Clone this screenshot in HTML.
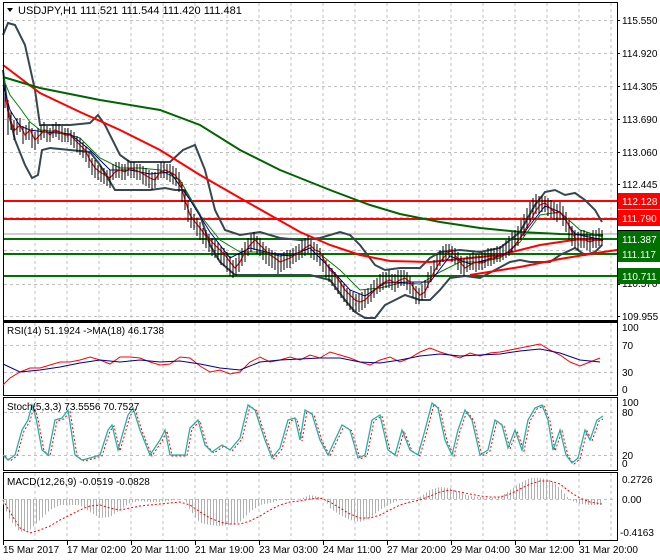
<!DOCTYPE html>
<html><head><meta charset="utf-8"><style>
html,body{margin:0;padding:0;background:#fff;width:660px;height:560px;overflow:hidden}
svg{display:block;font-family:"Liberation Sans",sans-serif;font-size:10px}
</style></head><body>
<svg width="660" height="560" viewBox="0 0 660 560" xmlns="http://www.w3.org/2000/svg">
<defs>
<pattern id="hp" width="3" height="600" patternUnits="userSpaceOnUse"><rect x="0" y="0" width="1" height="600" fill="#b0b0b0"/></pattern>
</defs>
<rect width="660" height="560" fill="#fff"/>
<g stroke="#c0c0c0" stroke-dasharray="3,3" stroke-width="1">
<path d="M35 3V320M67 3V320M99 3V320M131 3V320M163 3V320M195 3V320M227 3V320M259 3V320M291 3V320M323 3V320M355 3V320M387 3V320M419 3V320M451 3V320M483 3V320M515 3V320M547 3V320M579 3V320M611 3V320"/>
<path d="M35 323V395M67 323V395M99 323V395M131 323V395M163 323V395M195 323V395M227 323V395M259 323V395M291 323V395M323 323V395M355 323V395M387 323V395M419 323V395M451 323V395M483 323V395M515 323V395M547 323V395M579 323V395M611 323V395"/>
<path d="M35 398V470M67 398V470M99 398V470M131 398V470M163 398V470M195 398V470M227 398V470M259 398V470M291 398V470M323 398V470M355 398V470M387 398V470M419 398V470M451 398V470M483 398V470M515 398V470M547 398V470M579 398V470M611 398V470"/>
<path d="M35 473V540M67 473V540M99 473V540M131 473V540M163 473V540M195 473V540M227 473V540M259 473V540M291 473V540M323 473V540M355 473V540M387 473V540M419 473V540M451 473V540M483 473V540M515 473V540M547 473V540M579 473V540M611 473V540"/>
<path d="M4 20.5H616M4 53.5H616M4 86.5H616M4 119.5H616M4 152.5H616M4 184.5H616M4 217.5H616M4 250.5H616M4 284.5H616M4 316.5H616"/>
<path d="M4 345.5H616M4 372.5H616M4 412.5H616M4 455.5H616M4 499.5H616"/>
</g>
<g stroke-width="2">
<path d="M4 201H617" stroke="#ff0000"/>
<path d="M4 219H617" stroke="#ff0000"/>
<path d="M4 239H617" stroke="#007000"/>
<path d="M4 254H617" stroke="#007000"/>
<path d="M4 276H617" stroke="#007000"/>
</g>
<path d="M4 234H617" stroke="#a0a0a0" stroke-width="1"/>
<g fill="none" stroke="#37474f" stroke-width="2">
<polyline points="3,35 8,23 15,25 25,45 35,90 40,125 50,125 70,125 90,123 98,115 105,125 120,155 130,162 150,162 170,162 183,150 195,145 205,170 215,210 225,230 240,235 260,232 280,238 300,240 320,238 340,232 350,235 360,245 375,265 385,270 400,268 420,268 430,258 440,252 460,250 480,252 500,248 520,232 535,205 545,192 555,190 565,195 575,193 585,200 595,210 602,222"/>
<polyline points="3,70 8,110 15,140 25,165 32,178 38,175 42,150 50,148 70,150 90,152 100,165 115,190 125,190 150,190 165,188 175,190 185,190 200,215 210,245 220,262 235,275 250,275 270,275 290,275 310,275 330,280 345,300 355,312 365,318 375,318 385,305 395,300 405,295 420,300 430,300 440,290 450,278 465,276 480,278 495,270 510,262 520,260 530,262 540,262 550,262 560,255 575,248 585,255 595,252 602,245"/>
</g>
<polyline fill="none" stroke="#ff0000" stroke-width="2" points="3,65 40,93 80,112 120,130 160,150 200,175 240,198 270,215 300,232 330,245 360,255 390,261 430,262 470,258 500,255 540,245 580,239 603,240"/>
<polyline fill="none" stroke="#ff0000" stroke-width="2" points="470,275 520,267 560,259 590,254 617,250"/>
<polyline fill="none" stroke="#006400" stroke-width="2" points="3,77 40,88 100,100 160,110 200,125 240,150 280,170 330,190 370,205 400,214 440,222 480,228 520,232 560,234 603,235"/>
<polyline fill="none" stroke="#008000" stroke-width="1" points="3,78 10,95 20,108 30,122 40,130 60,132 80,138 100,158 120,168 140,168 160,170 180,180 200,215 220,240 240,252 260,252 280,256 300,253 320,254 340,270 360,290 380,288 400,283 420,284 440,272 460,262 480,262 500,258 520,242 540,215 560,212 580,230 603,237"/>
<polyline fill="none" stroke="#00008b" stroke-width="1" points="3,85 10,110 20,126 30,130 45,132 70,134 90,150 110,170 130,170 150,174 170,172 190,200 210,232 230,258 250,248 270,253 290,256 310,248 330,268 350,290 365,296 385,283 410,282 430,282 450,256 470,264 490,259 510,252 530,225 545,206 560,212 575,234 603,240"/>
<polyline fill="none" stroke="#ff0000" stroke-width="1.2" points="5,95 10,120 15,130 20,125 25,135 30,130 35,140 40,135 45,130 50,135 55,130 60,132 65,135 70,135 75,140 80,145 85,150 90,160 95,168 100,172 105,175 110,178 115,172 120,170 125,172 130,168 135,170 140,172 145,175 150,178 155,180 160,172 165,170 170,172 175,175 180,182 185,200 190,215 195,222 200,228 205,235 210,240 215,245 220,250 225,255 230,262 235,268 240,262 245,252 250,245 255,240 260,245 265,250 270,255 275,258 280,262 285,260 290,258 295,255 300,252 305,248 310,245 315,250 320,252 325,262 330,270 335,275 340,282 345,290 350,295 355,300 360,302 365,300 370,295 375,290 380,285 385,282 390,280 395,283 400,280 405,278 410,282 415,290 420,295 425,292 430,280 435,270 440,262 445,256 450,250 455,255 460,262 465,268 470,265 475,262 480,263 485,262 490,258 495,258 500,256 505,255 510,250 515,245 520,238 525,230 530,222 535,212 540,205 545,203 550,208 555,213 560,212 565,218 570,228 575,238 580,240 585,240 590,242 595,240 600,240"/>
<path stroke="#000" stroke-width="1" fill="none" d="M5 85V108M8 100V135M11 112V130M14 120V140M17 118V135M20 118V132M23 126V144M26 125V140M29 122V140M32 128V148M35 132V150M38 128V144M41 125V140M44 122V138M47 126V142M50 128V142M53 124V138M56 122V137M59 124V140M62 126V142M65 128V142M68 128V142M71 130V145M74 132V148M77 136V152M80 138V155M83 142V158M86 146V162M89 152V168M92 158V175M95 160V178M98 165V180M101 166V182M104 168V184M107 170V186M110 170V188M113 164V180M116 162V178M119 162V178M122 164V180M125 164V180M128 160V176M131 162V178M134 162V178M137 164V180M140 164V180M143 166V184M146 168V186M149 170V188M152 172V190M155 172V188M158 164V180M161 162V178M164 162V178M167 164V180M170 164V182M173 166V184M176 168V186M179 172V192M182 182V202M185 190V210M188 200V222M191 208V228M194 214V230M197 218V236M200 222V240M203 228V244M206 230V248M209 234V252M212 238V256M215 240V258M218 242V260M221 246V265M224 248V266M227 252V272M230 256V276M233 260V278M236 258V276M239 254V272M242 248V266M245 242V262M248 238V256M251 234V252M254 232V250M257 236V254M260 238V256M263 242V260M266 246V264M269 248V266M272 250V268M275 252V270M278 254V274M281 254V272M284 252V270M287 250V268M290 250V268M293 248V264M296 246V262M299 244V260M302 240V258M305 238V256M308 236V254M311 240V258M314 242V260M317 244V262M320 248V266M323 254V272M326 260V278M329 264V282M332 268V286M335 272V290M338 276V294M341 280V298M344 284V302M347 288V306M350 290V310M353 292V312M356 294V312M359 294V312M362 292V310M365 290V308M368 288V304M371 284V302M374 280V298M377 278V294M380 274V292M383 272V290M386 272V288M389 270V288M392 274V290M395 274V292M398 270V288M401 270V286M404 270V286M407 272V290M410 276V294M413 282V298M416 286V304M419 288V304M422 284V300M425 280V298M428 272V288M431 266V282M434 260V276M437 254V270M440 250V266M443 246V262M446 244V260M449 244V258M452 246V262M455 248V264M458 252V270M461 256V274M464 258V276M467 256V272M470 254V270M473 252V270M476 254V272M479 254V270M482 252V270M485 252V268M488 248V266M491 248V266M494 248V264M497 246V262M500 246V262M503 244V260M506 240V258M509 236V256M512 232V252M515 230V250M518 226V246M521 220V240M524 214V236M527 208V228M530 202V222M533 198V218M536 194V214M539 196V214M542 196V212M545 196V212M548 198V216M551 200V218M554 202V220M557 204V222M560 202V220M563 206V226M566 212V232M569 220V240M572 226V246M575 230V248M578 232V250M581 230V248M584 230V248M587 232V250M590 234V252M593 230V248M596 230V248M599 228V246M602 230V246"/>
<g fill="none" stroke="#000" stroke-width="1">
<rect x="3.5" y="2.5" width="614" height="318"/>
<rect x="3.5" y="322.5" width="614" height="73"/>
<rect x="3.5" y="397.5" width="614" height="73"/>
<rect x="3.5" y="472.5" width="614" height="68"/>
</g>
<path d="M3 321.5H618" stroke="#000"/>
<path d="M7 8L13 8L10 12Z" fill="#000"/>
<text x="18" y="14" font-size="11">USDJPY,H1  111.521 111.544 111.420 111.481</text>
<polyline fill="none" stroke="#ff0000" stroke-width="1" points="3,385 10,378 20,372 30,368 40,368 50,365 60,362 70,362 80,360 90,357 100,360 110,364 120,357 130,357 140,358 150,362 160,365 170,364 180,357 190,358 200,366 210,372 220,370 230,374 240,372 250,362 260,357 270,362 280,360 290,357 300,360 310,355 320,358 330,352 340,355 350,358 360,362 370,365 380,360 390,357 400,362 410,358 420,352 430,348 440,352 450,355 460,358 470,353 480,356 490,353 500,352 510,350 520,348 530,346 540,344 550,350 560,355 570,362 580,366 590,362 600,358"/>
<polyline fill="none" stroke="#00008b" stroke-width="1" points="3,364 20,372 40,370 60,367 80,363 100,360 120,362 140,360 160,362 180,361 200,364 220,368 240,370 260,362 280,360 300,359 320,358 340,358 360,362 380,363 400,360 420,356 440,354 460,356 480,355 500,354 520,351 540,349 560,353 580,360 600,362"/>
<text x="7" y="334">RSI(14) 51.1924  -&gt;MA(18) 46.1738</text>
<polyline fill="none" stroke="#ff0000" stroke-width="1" stroke-dasharray="2,2" transform="translate(2,1)" points="3,455 8,460 15,455 22,430 28,420 32,405 36,418 42,450 48,455 55,420 62,418 68,410 75,455 82,460 90,458 100,455 108,430 112,425 118,450 128,415 133,408 140,430 150,455 160,440 165,430 170,455 185,455 190,428 198,420 205,445 212,452 222,445 230,450 240,438 248,405 255,410 265,440 272,458 280,448 288,420 295,418 300,440 305,410 312,414 320,440 328,455 335,440 342,425 350,430 358,458 365,455 372,420 380,415 388,450 395,455 402,430 410,450 418,455 425,430 432,403 438,408 445,440 452,455 458,430 465,410 472,420 480,455 488,450 495,420 502,425 508,448 515,430 522,450 528,420 535,408 542,405 548,420 553,450 560,430 566,455 572,463 578,458 585,430 590,440 597,420 601,418"/>
<polyline fill="none" stroke="#20b2aa" stroke-width="1.3" points="3,455 8,460 15,455 22,430 28,420 32,405 36,418 42,450 48,455 55,420 62,418 68,410 75,455 82,460 90,458 100,455 108,430 112,425 118,450 128,415 133,408 140,430 150,455 160,440 165,430 170,455 185,455 190,428 198,420 205,445 212,452 222,445 230,450 240,438 248,405 255,410 265,440 272,458 280,448 288,420 295,418 300,440 305,410 312,414 320,440 328,455 335,440 342,425 350,430 358,458 365,455 372,420 380,415 388,450 395,455 402,430 410,450 418,455 425,430 432,403 438,408 445,440 452,455 458,430 465,410 472,420 480,455 488,450 495,420 502,425 508,448 515,430 522,450 528,420 535,408 542,405 548,420 553,450 560,430 566,455 572,463 578,458 585,430 590,440 597,420 603,416"/>
<text x="7" y="410">Stoch(5,3,3) 73.5556 70.7527</text>
<polygon fill="url(#hp)" points="3,499 3,503 10,520 20,532 30,530 40,520 50,510 60,505 70,505 80,505 90,512 100,518 110,517 120,510 130,503 140,501 150,502 160,502 170,501 180,499 185,499 190,510 200,523 210,525 220,526 230,525 240,522 250,512 260,505 270,503 280,500 290,500 300,499 310,495 320,497 325,499 330,508 340,515 350,520 360,522 370,518 380,510 390,504 400,500 410,500 420,497 430,490 440,487 450,488 460,493 470,496 480,497 490,498 500,497 510,490 520,483 530,478 540,478 550,480 560,488 570,500 580,504 590,505 602,505 602,499"/>
<polyline fill="none" stroke="#ff0000" stroke-width="1" stroke-dasharray="2,2" points="3,500 10,512 20,528 30,533 40,530 50,526 60,520 70,515 80,510 90,506 100,505 110,508 120,510 130,508 140,506 150,505 160,504 170,503 180,502 190,505 200,512 210,518 220,522 230,524 240,524 250,521 260,516 270,510 280,505 290,502 300,501 310,499 320,498 330,502 340,508 350,514 360,518 370,518 380,515 390,510 400,505 410,502 420,500 430,496 440,492 450,490 460,492 470,494 480,496 490,497 500,497 510,494 520,489 530,484 540,481 550,481 560,484 570,492 580,498 590,502 602,504"/>
<text x="7" y="485">MACD(12,26,9) -0.0519 -0.0828</text>
<g fill="#000">
<text x="622" y="24">115.550</text><text x="622" y="57">114.920</text><text x="622" y="90">114.305</text>
<text x="622" y="123">113.690</text><text x="622" y="156">113.060</text><text x="622" y="188">112.445</text>
<text x="622" y="287">110.570</text><text x="622" y="320">109.955</text>
<text x="622" y="331">100</text><text x="622" y="349">70</text><text x="622" y="376">30</text><text x="622" y="393">0</text>
<text x="622" y="406">100</text><text x="622" y="416">80</text><text x="622" y="459">20</text><text x="622" y="467">0</text>
<text x="622" y="483">0.2726</text><text x="622" y="503">0.00</text><text x="620" y="536">-0.4163</text>
</g>
<g stroke="#000"><path d="M617 20.5h3M617 53.5h3M617 86.5h3M617 119.5h3M617 152.5h3M617 184.5h3M617 284.5h3M617 316.5h3"/></g>
<rect x="618" y="230" width="42" height="8" fill="#000"/>
<rect x="618" y="193" width="42" height="16" fill="#ff0000"/><text x="622" y="205" fill="#fff">112.128</text>
<rect x="618" y="210" width="42" height="16" fill="#ff0000"/><text x="622" y="222" fill="#fff">111.790</text>
<rect x="618" y="231" width="42" height="16" fill="#007000"/><text x="622" y="243" fill="#fff">111.387</text>
<rect x="618" y="246" width="42" height="16" fill="#007000"/><text x="622" y="258" fill="#fff">111.117</text>
<rect x="618" y="268" width="42" height="16" fill="#007000"/><text x="622" y="280" fill="#fff">110.711</text>
<g stroke="#000"><path d="M3.5 541v4M67.5 541v4M131.5 541v4M195.5 541v4M259.5 541v4M323.5 541v4M387.5 541v4M451.5 541v4M515.5 541v4M579.5 541v4"/></g>
<g fill="#000">
<text x="3" y="553">15 Mar 2017</text><text x="67" y="553">17 Mar 02:00</text><text x="131" y="553">20 Mar 11:00</text>
<text x="195" y="553">21 Mar 19:00</text><text x="259" y="553">23 Mar 03:00</text><text x="323" y="553">24 Mar 11:00</text>
<text x="387" y="553">27 Mar 20:00</text><text x="451" y="553">29 Mar 04:00</text><text x="515" y="553">30 Mar 12:00</text>
<text x="579" y="553">31 Mar 20:00</text>
</g>
</svg>
</body></html>
